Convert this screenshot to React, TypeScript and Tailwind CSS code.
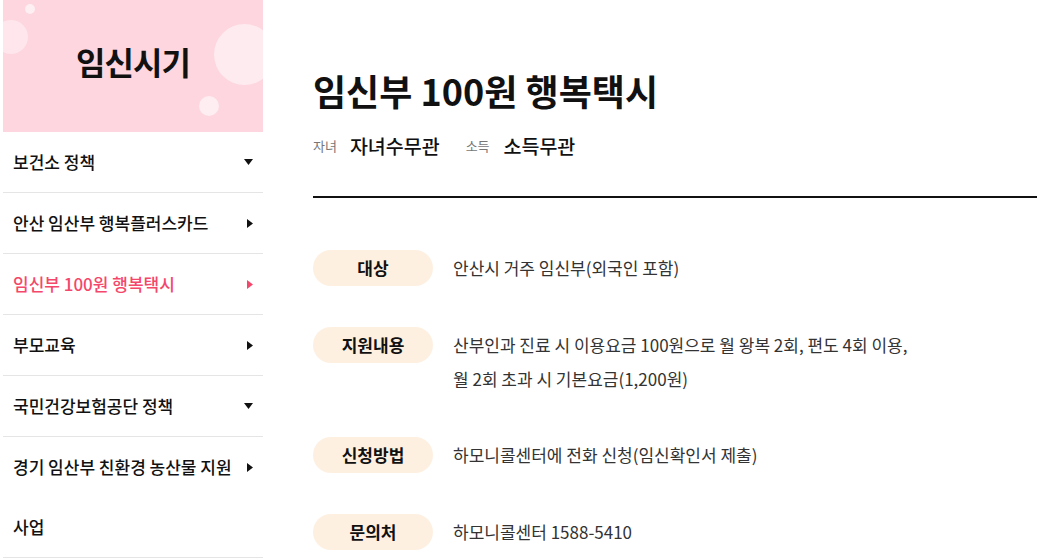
import React from "react";

const font = { fontFamily: '"Noto Sans CJK KR", "Noto Sans", sans-serif' };

function Down() {
  return (
    <svg width="9" height="6" viewBox="0 0 9 6" className="shrink-0">
      <polygon points="0,0 9,0 4.5,6" fill="#111" />
    </svg>
  );
}
function Right({ color = "#111" }: { color?: string }) {
  return (
    <svg width="6" height="9" viewBox="0 0 6 9" className="shrink-0">
      <polygon points="0,0 6,4.5 0,9" fill={color} />
    </svg>
  );
}

const menu: { label: string; icon: "down" | "right" | "none"; active?: boolean }[] = [
  { label: "보건소 정책", icon: "down" },
  { label: "안산 임산부 행복플러스카드", icon: "right" },
  { label: "임신부 100원 행복택시", icon: "right", active: true },
  { label: "부모교육", icon: "right" },
  { label: "국민건강보험공단 정책", icon: "down" },
  { label: "경기 임산부 친환경 농산물 지원 사업", icon: "right" },
];

const rows: { label: string; value: string[] }[] = [
  { label: "대상", value: ["안산시 거주 임신부(외국인 포함)"] },
  {
    label: "지원내용",
    value: ["산부인과 진료 시 이용요금 100원으로 월 왕복 2회, 편도 4회 이용,", "월 2회 초과 시 기본요금(1,200원)"],
  },
  { label: "신청방법", value: ["하모니콜센터에 전화 신청(임신확인서 제출)"] },
  { label: "문의처", value: ["하모니콜센터 1588-5410"] },
];

export default function App() {
  return (
    <div className="flex w-[1037px] h-[559px] overflow-hidden bg-white" style={font}>
      <aside className="ml-[3px] w-[260px] shrink-0">
        <div className="relative h-[132px] bg-[#fdd6df] overflow-hidden flex items-center justify-center">
          <span className="absolute left-[22px] top-[4px] w-[10px] h-[10px] rounded-full bg-white/60" />
          <span className="absolute left-[-9px] top-[20px] w-[34px] h-[34px] rounded-full bg-white/40" />
          <span className="absolute left-[211px] top-[24px] w-[61px] h-[61px] rounded-full bg-white/50" />
          <span className="absolute left-[196px] top-[96px] w-[20px] h-[20px] rounded-full bg-white/55" />
          <h2 className="relative text-[32px] font-bold text-[#111] tracking-[-1px] leading-none -mt-[10px]">임신시기</h2>
        </div>
        <ul>
          {menu.map((m) => (
            <li
              key={m.label}
              className={`flex items-start justify-between border-b border-[#e5e5e5] pl-[10px] pr-[10px] text-[17px] font-medium leading-[60px] ${
                m.active ? "text-[#f5476b]" : "text-[#111]"
              }`}
            >
              <span className="w-[222px]">{m.label}</span>
              <span className="h-[60px] flex items-center">
                {m.icon === "down" ? <Down /> : m.icon === "right" ? <Right color={m.active ? "#f5476b" : "#111"} /> : null}
              </span>
            </li>
          ))}
        </ul>
      </aside>
      <main className="ml-[50px] flex-1 pt-[64px]">
        <h1 className="text-[36px] font-bold text-[#111] leading-[52px]">임신부 100원 행복택시</h1>
        <div className="mt-[17px] flex items-center h-[26px]">
          <span className="text-[13px] text-[#777]">자녀</span>
          <span className="ml-[13px] text-[19.5px] font-medium text-[#111]">자녀수무관</span>
          <span className="ml-[26px] text-[13px] text-[#777]">소득</span>
          <span className="ml-[14px] text-[19.5px] font-medium text-[#111]">소득무관</span>
        </div>
        <div className="mt-[37px] h-[2px] bg-[#111]" />
        <div className="mt-[52px] flex flex-col gap-[41px]">
          {rows.map((r) => (
            <div key={r.label} className="flex items-start">
              <div className="w-[120px] h-[36px] shrink-0 rounded-full bg-[#fef0e1] flex items-center justify-center text-[17px] font-bold text-[#111]">
                {r.label}
              </div>
              <div className="ml-[20px] mt-[1px] text-[17px] leading-[34px] text-[#333]">
                {r.value.map((v) => (
                  <div key={v}>{v}</div>
                ))}
              </div>
            </div>
          ))}
        </div>
      </main>
    </div>
  );
}
